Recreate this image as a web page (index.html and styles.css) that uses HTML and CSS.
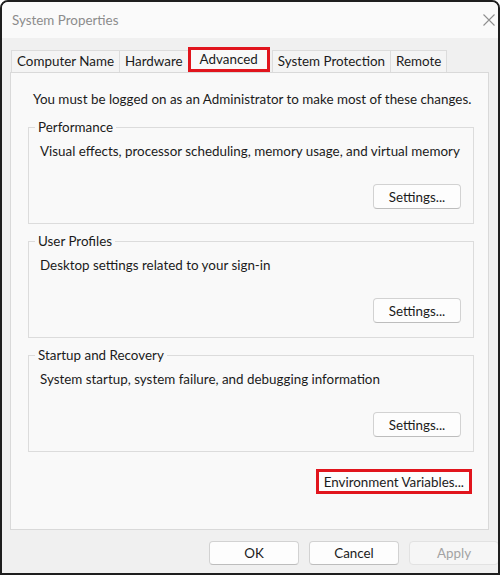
FILE: index.html
```html
<!DOCTYPE html>
<html lang="en">
<head>
  <meta charset="UTF-8" />
  <meta name="viewport" content="width=device-width, initial-scale=1.0"/>
  <title>System Properties</title>
  <link rel="stylesheet" href="styles.css">
</head>
<body>
  <div class="window">
    <div class="titlebar">
      <span class="title">System Properties</span>
      <svg class="close" width="12" height="12" viewBox="0 0 12 12">
        <path d="M0.5 0.5 L11.5 11.5 M11.5 0.5 L0.5 11.5" stroke="#8f8f8f" stroke-width="1.1" fill="none"/>
      </svg>
    </div>

    <div class="content">
      <div class="tabs">
        <div class="tab">Computer Name</div>
        <div class="tab">Hardware</div>
        <div class="tab active">Advanced</div>
        <div class="tab">System Protection</div>
        <div class="tab">Remote</div>
      </div>

      <div class="panel">
        <p class="note">You must be logged on as an Administrator to make most of these changes.</p>

        <fieldset class="group">
          <legend>Performance</legend>
          <p class="desc">Visual effects, processor scheduling, memory usage, and virtual memory</p>
          <div class="actions"><button class="btn">Settings...</button></div>
        </fieldset>

        <fieldset class="group">
          <legend>User Profiles</legend>
          <p class="desc">Desktop settings related to your sign-in</p>
          <div class="actions"><button class="btn">Settings...</button></div>
        </fieldset>

        <fieldset class="group">
          <legend>Startup and Recovery</legend>
          <p class="desc">System startup, system failure, and debugging information</p>
          <div class="actions"><button class="btn">Settings...</button></div>
        </fieldset>

        <div class="env-row">
          <button class="btn env">Environment Variables...</button>
        </div>
      </div>
    </div>

    <div class="footer">
      <button class="btn wide">OK</button>
      <button class="btn wide">Cancel</button>
      <button class="btn wide" disabled>Apply</button>
    </div>
  </div>
</body>
</html>
```

FILE: styles.css
```css
body {
  margin: 0;
  font-family: Lato, "Liberation Sans", sans-serif;
  font-size: 13.4px;
  color: #1b1b1b;
}

.window {
  width: 500px;
  height: 575px;
  box-sizing: border-box;
  border: 2px solid #1e1e1e;
  border-radius: 8px 8px 0 0;
  background-color: #f0f0f0;
  display: flex;
  flex-direction: column;
  overflow: hidden;
  white-space: nowrap;
}

.titlebar {
  height: 36px;
  background-color: #fafafa;
  display: flex;
  align-items: center;
  justify-content: space-between;
  padding: 0 3px 0 10px;
}

.title {
  color: #8c8c8c;
}

.close {
  display: block;
}

.content {
  padding: 9px 9px 0 8px;
}

/* tab strip */
.tabs {
  display: flex;
  align-items: flex-end;
  height: 25px;
  padding-left: 1px;
}

.tab {
  height: 22px;
  box-sizing: border-box;
  line-height: 21px;
  padding: 0 5px;
  background-color: #f4f4f4;
  border: 1px solid #dcdcdc;
  border-bottom: none;
  margin-right: -1px;
}

.tab.active {
  height: 25px;
  line-height: 19px;
  background-color: #f9f9f9;
  border: 3px solid #e1151d;
  padding: 0 9px;
  margin-right: 2px;
}

.panel {
  height: 458px;
  box-sizing: border-box;
  background-color: #f9f9f9;
  border: 1px solid #d9d9d9;
  padding: 17px 14px 0 17px;
}

.note {
  margin: 0 0 10px 5px;
  line-height: 18px;
}

/* group boxes */
.group {
  margin: 0 0 8px;
  padding: 6px 12px 14px 11px;
  border: 1px solid #dcdcdc;
}

.group legend {
  padding: 0 3px;
  margin-left: -5px;
  line-height: 18px;
}

.desc {
  margin: 0;
  line-height: 18px;
}

.actions {
  display: flex;
  justify-content: flex-end;
  margin-top: 24px;
}

.btn {
  font-family: inherit;
  font-size: 13.4px;
  color: #1b1b1b;
  height: 25px;
  width: 88px;
  padding: 0;
  background-color: #fdfdfd;
  border: 1px solid #d2d2d2;
  border-bottom-color: #bdbdbd;
  border-radius: 4px;
}

.btn:disabled {
  color: #a3a3a3;
  background-color: #f6f6f6;
  border-color: #e2e2e2;
}

.env-row {
  display: flex;
  justify-content: flex-end;
  margin: 17px 2px 0 0;
}

.btn.env {
  width: auto;
  height: 25px;
  padding: 0 5px;
  border: 3px solid #e1151d;
  border-radius: 0;
  background-color: #fdfdfd;
}

.footer {
  display: flex;
  gap: 10px;
  padding: 11px 0 0 207px;
}

.btn.wide {
  width: 90px;
  height: 24px;
  flex-shrink: 0;
}
```
